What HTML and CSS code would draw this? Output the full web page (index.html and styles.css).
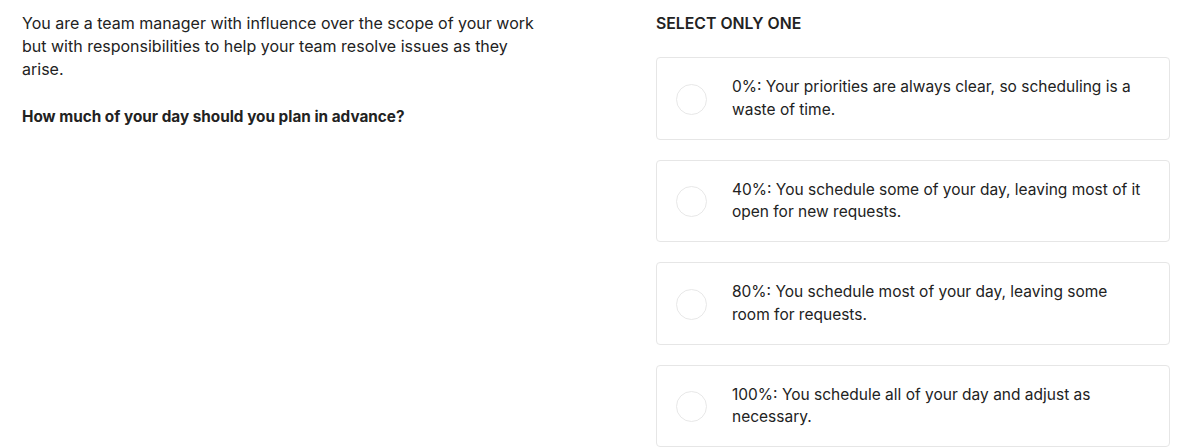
FILE: index.html
```html
<!DOCTYPE html>
<html>
<head>
<meta charset="utf-8">
<link rel="stylesheet" href="styles.css">
</head>
<body>
<div class="page">
  <section class="prompt">
    <p class="scenario">You are a team manager with influence over the scope of your work but with responsibilities to help your team resolve issues as they arise.</p>
    <p class="question">How much of your day should you plan in advance?</p>
  </section>
  <section class="choices">
    <h2 class="label">SELECT ONLY ONE</h2>
    <div class="list">
      <label class="option"><span class="radio"></span><span class="text">0%: Your priorities are always clear, so scheduling is a waste of time.</span></label>
      <label class="option"><span class="radio"></span><span class="text">40%: You schedule some of your day, leaving most of it open for new requests.</span></label>
      <label class="option"><span class="radio"></span><span class="text">80%: You schedule most of your day, leaving some room for requests.</span></label>
      <label class="option"><span class="radio"></span><span class="text">100%: You schedule all of your day and adjust as necessary.</span></label>
    </div>
  </section>
</div>
</body>
</html>
```
FILE: styles.css
```css
* { box-sizing: border-box; }
html, body { margin: 0; padding: 0; background: #fff; }
body {
  font-family: Inter, "Noto Sans", Arial, sans-serif;
  color: #222;
  font-size: 16px;
  line-height: 23px;
}
.page {
  display: grid;
  grid-template-columns: 515px 514px;
  column-gap: 119px;
  padding: 11px 0 0 22px;
}
.prompt { padding-top: 1px; }
.prompt p { margin: 0; }
.scenario { margin-bottom: 24px !important; }
.question { font-weight: 700; font-size: 15.3px; }
.label {
  margin: 0 0 22px 0;
  padding-top: 2px;
  font-size: 15.8px;
  font-weight: 600;
  line-height: 22px;
  letter-spacing: 0;
}
.list { display: flex; flex-direction: column; gap: 20px; }
.option {
  display: flex;
  align-items: center;
  height: 82.5px;
  border: 1px solid #e6e6e6;
  border-radius: 4px;
  padding: 1px 20px 0 19px;
}
.radio {
  flex: 0 0 31px;
  width: 31px;
  height: 31px;
  border: 1px solid #e8e8e8;
  border-radius: 50%;
  margin-right: 25px;
  margin-top: 1px;
}
.text { display: block; width: 410px; font-size: 15.5px; line-height: 22.5px; }
```
